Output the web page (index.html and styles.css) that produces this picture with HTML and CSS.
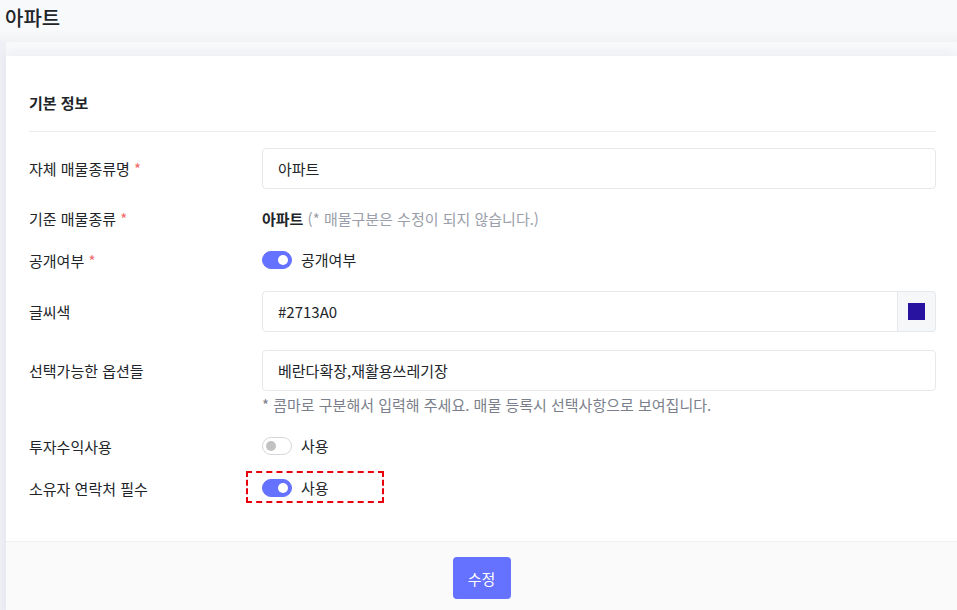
FILE: index.html
```html
<!DOCTYPE html>
<html lang="ko">
<head>
    <meta charset="UTF-8">
    <meta name="viewport" content="width=device-width, initial-scale=1.0">
    <title>아파트</title>
    <link rel="stylesheet" href="styles.css">
</head>
<body>
    <div id="page">
        <h1 class="page-title">아파트</h1>

        <div class="card">
            <div class="card-body">
                <h2 class="section-title">기본 정보</h2>

                <div class="form-row">
                    <label class="form-label">자체 매물종류명 <span class="req">*</span></label>
                    <div class="form-control">
                        <input class="input" type="text" value="아파트">
                    </div>
                </div>

                <div class="form-row">
                    <label class="form-label">기준 매물종류 <span class="req">*</span></label>
                    <div class="form-control">
                        <span class="plain-strong">아파트</span>
                        <span class="muted">(* 매물구분은 수정이 되지 않습니다.)</span>
                    </div>
                </div>

                <div class="form-row">
                    <label class="form-label">공개여부 <span class="req">*</span></label>
                    <div class="form-control">
                        <label class="switch">
                            <span class="toggle on"></span>
                            공개여부
                        </label>
                    </div>
                </div>

                <div class="form-row">
                    <label class="form-label">글씨색</label>
                    <div class="form-control">
                        <div class="input-group">
                            <input class="input" type="text" value="#2713A0">
                            <span class="addon"><span class="swatch"></span></span>
                        </div>
                    </div>
                </div>

                <div class="form-row top">
                    <label class="form-label">선택가능한 옵션들</label>
                    <div class="form-control">
                        <input class="input" type="text" value="베란다확장,재활용쓰레기장">
                        <div class="help">* 콤마로 구분해서 입력해 주세요. 매물 등록시 선택사항으로 보여집니다.</div>
                    </div>
                </div>

                <div class="form-row">
                    <label class="form-label">투자수익사용</label>
                    <div class="form-control">
                        <label class="switch">
                            <span class="toggle"></span>
                            사용
                        </label>
                    </div>
                </div>

                <div class="form-row">
                    <label class="form-label">소유자 연락처 필수</label>
                    <div class="form-control">
                        <label class="switch marked">
                            <span class="toggle on"></span>
                            사용
                        </label>
                    </div>
                </div>
            </div>

            <div class="card-footer">
                <button class="btn-primary">수정</button>
            </div>
        </div>
    </div>
</body>
</html>
```

FILE: styles.css
```css
body{
    margin: 0;
    background: #f8f9fb;
    font-family: "Noto Sans CJK KR", "Noto Sans", sans-serif;
    color: #212529;
    font-size: 15px;
}

#page{
    height: 610px;
    overflow: hidden;
    background: linear-gradient(90deg, #eef0f5 0, #eef0f5 6px, #f8f9fb 6px);
}

.page-title{
    margin: 0;
    padding: 4px 5px 0;
    height: 38px;
    font-size: 20px;
    font-weight: 500;
    line-height: 28px;
    background: linear-gradient(180deg, #f8f9fb 0, #f8f9fb 30px, #f1f2f5 42px);
}

.card{
    margin: 14px 0 0 6px;
    background: #fff;
    box-shadow: 0 -4px 10px rgba(20, 30, 60, 0.05);
}

.card-body{
    padding: 37px 21px 40px 23px;
}

.section-title{
    margin: 0 0 16px;
    padding-bottom: 18px;
    border-bottom: 1px solid #e9ebef;
    font-size: 15px;
    font-weight: 600;
    line-height: 20px;
}

.form-row{
    display: flex;
    align-items: center;
    min-height: 24px;
    margin-bottom: 18px;
}

.form-row.top{
    align-items: flex-start;
}

.form-row.top .form-label{
    line-height: 41px;
}

.form-row:last-child{
    margin-bottom: 0;
}

.form-label{
    width: 233px;
    flex: none;
    line-height: 20px;
}

.req{
    color: #f46a6a;
}

.form-control{
    flex: 1;
    line-height: 20px;
}

.input{
    box-sizing: border-box;
    width: 100%;
    height: 41px;
    padding: 0 15px;
    border: 1px solid #e6e8ec;
    border-radius: 4px;
    font-family: inherit;
    font-size: 15px;
    color: #212529;
    outline: none;
}

.input-group{
    display: flex;
}

.input-group .input{
    border-radius: 4px 0 0 4px;
}

.addon{
    width: 37px;
    flex: none;
    display: flex;
    align-items: center;
    justify-content: center;
    border: 1px solid #e6e8ec;
    border-left: none;
    border-radius: 0 4px 4px 0;
    background: #f6f7f9;
}

.swatch{
    width: 17px;
    height: 17px;
    background: #2713A0;
}

.plain-strong{
    font-weight: 700;
}

.muted{
    color: #9a9eaa;
}

.help{
    margin-top: 3px;
    margin-bottom: 1px;
    font-size: 15px;
    color: #7b7f8c;
    line-height: 22px;
}

.switch{
    position: relative;
    display: inline-flex;
    align-items: center;
    gap: 9px;
}

.toggle{
    position: relative;
    box-sizing: border-box;
    width: 30px;
    height: 18px;
    border-radius: 9px;
    border: 1px solid #d5d7dc;
    background: #fff;
}

.toggle::after{
    content: "";
    position: absolute;
    top: 3px;
    left: 3px;
    width: 10px;
    height: 10px;
    border-radius: 50%;
    background: #c2c2c2;
}

.toggle.on{
    border-color: #6571ff;
    background: #6571ff;
}

.toggle.on::after{
    left: auto;
    right: 3px;
    background: #fff;
}

.switch.marked::before{
    content: "";
    position: absolute;
    left: -16px;
    top: -7px;
    width: 134px;
    height: 28px;
    border: 2px dashed #e8000b;
}

.card-footer{
    display: flex;
    justify-content: center;
    padding: 15px 0 20px;
    background: #fafafa;
    border-top: 1px solid #f0f1f3;
}

.btn-primary{
    width: 58px;
    height: 42px;
    border: none;
    border-radius: 4px;
    background: #6571ff;
    color: #fff;
    font-family: inherit;
    font-size: 15px;
    cursor: pointer;
}
```
